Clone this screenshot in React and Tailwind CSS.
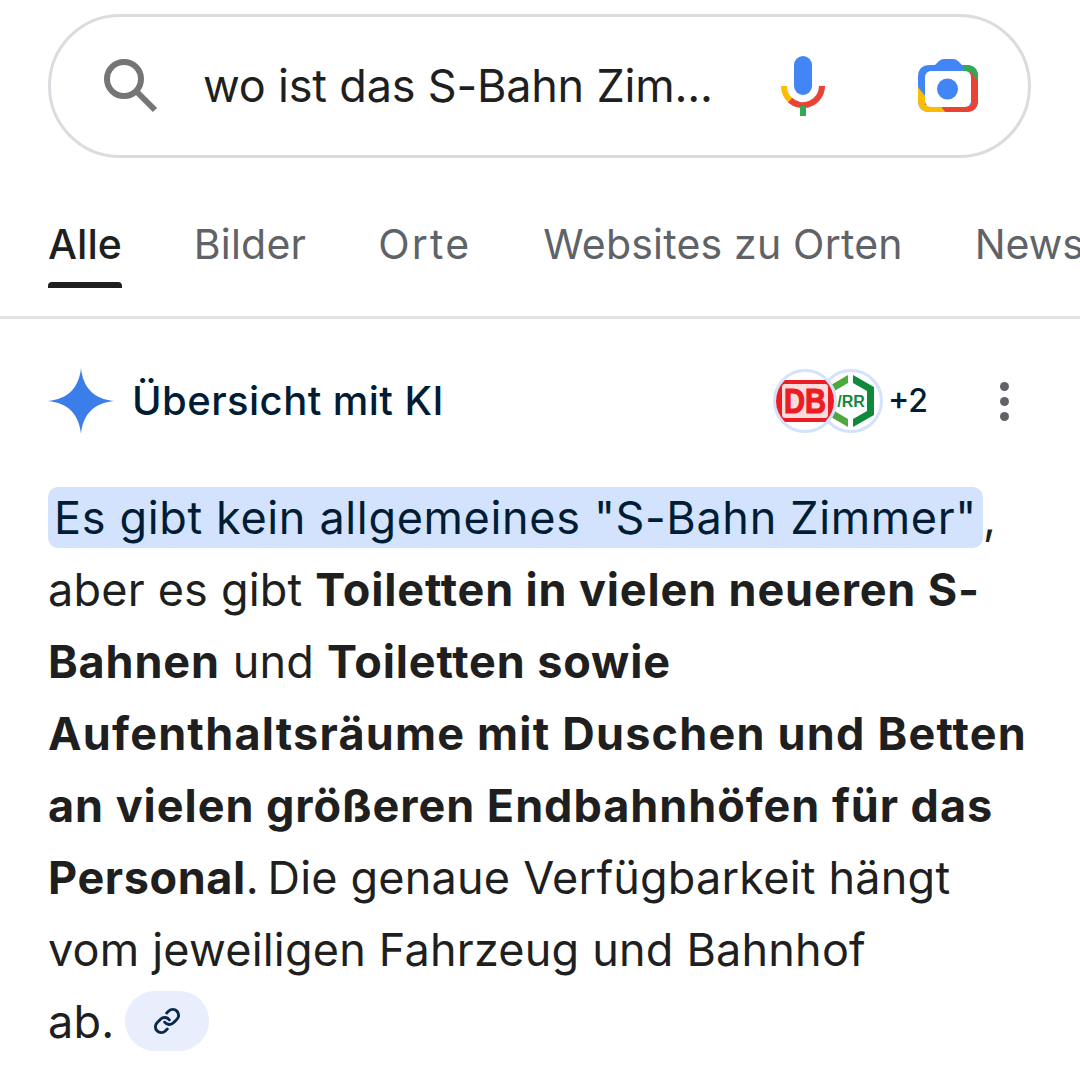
import React from 'react';

const font = { fontFamily: 'Inter, sans-serif' };

const MicIcon = () => (
  <svg width="44" height="62" viewBox="0 0 44 62" fill="none">
    <rect x="13" y="0" width="18" height="39" rx="9" fill="#4285f4" />
    <path d="M3 30 A19 19 0 0 0 9 44" stroke="#fbbc04" strokeWidth="6" />
    <path d="M9 44 A19 19 0 0 0 41 30" stroke="#ea4335" strokeWidth="6" />
    <rect x="19" y="50" width="6" height="10" fill="#34a853" />
  </svg>
);

const CameraIcon = () => (
  <svg width="60" height="54" viewBox="0 0 60 54" fill="none">
    <defs>
      <clipPath id="cam">
        <path d="M12 6 H17 L21 2 Q23 0 26 0 H35 Q38 0 40 2 L44 6 H48 Q60 6 60 18 V41 Q60 53 48 53 H12 Q0 53 0 41 V18 Q0 6 12 6Z" />
      </clipPath>
    </defs>
    <g clipPath="url(#cam)">
      <rect x="0" y="0" width="60" height="54" fill="#4285f4" />
      <path d="M46 0 H60 V22 L52 14 H46 Z" fill="#34a853" />
      <path d="M52 12 L60 22 V54 H28 L22 47 H54 Z" fill="#ea4335" />
      <path d="M0 28 L7 37 V46 H22 L28 54 H0 Z" fill="#fbbc04" />
    </g>
    <rect x="7" y="12" width="46" height="36" rx="6" fill="#fff" />
    <circle cx="29.500" cy="30" r="10.500" fill="#4285f4" />
  </svg>
);

const Sparkle = () => (
  <svg width="66" height="66" viewBox="0 0 66 66">
    <path d="M33 0 C35 20 46 31 66 33 C46 35 35 46 33 66 C31 46 20 35 0 33 C20 31 31 20 33 0Z" fill="#3b7de9" />
  </svg>
);

const Logos = () => (
  <div className="flex items-center">
    <div className="z-10 flex h-[64px] w-[64px] items-center justify-center overflow-hidden rounded-full border-[3px] border-[#d3e3fd] bg-white">
      <svg width="58" height="58" viewBox="0 0 58 58">
        <rect x="-2" y="8" width="62" height="42" rx="6" fill="#ec1c24" />
        <rect x="6" y="12" width="46" height="34" rx="3" fill="#fff" opacity="0.85" />
        <text x="29" y="41" textAnchor="middle" fontSize="35" fontWeight="700" fill="#ec1c24" stroke="#ec1c24" strokeWidth="1.200" fontFamily="Liberation Sans, sans-serif" textLength="42" lengthAdjust="spacingAndGlyphs">DB</text>
      </svg>
    </div>
    <div className="ml-[-18px] flex h-[64px] w-[64px] items-center justify-center rounded-full border-[3px] border-[#d3e3fd] bg-white">
      <svg width="58" height="58" viewBox="0 0 58 58">
        <path d="M26 3 L9 13 V21 L26 11 Z" fill="#4fa83d" />
        <path d="M26 55 L9 45 V37 L26 47 Z" fill="#4fa83d" />
        <path d="M31 3 L52 15 V43 L31 55 V47 L45 39 V19 L31 11 Z" fill="#0f8a3c" />
        <text x="29" y="35" textAnchor="middle" fontSize="16" fontWeight="700" fill="#0f8a3c" fontFamily="Liberation Sans, sans-serif">/RR</text>
      </svg>
    </div>
  </div>
);

const App = () => {
  return (
    <div className="h-[1080px] w-[1080px] overflow-hidden bg-white text-[#1f1f1f]" style={font}>
      <div className="pr-[49px] pl-[48px] pt-[14px]">
        <div className="flex h-[144px] items-center rounded-full border-[3px] border-[#dadce0] pl-[53px]">
          <svg width="54" height="54" viewBox="0 0 54 54" fill="none" stroke="#757575" strokeWidth="6">
            <circle cx="20" cy="20" r="17" />
            <path d="M32 32 L51 51" />
          </svg>
          <span className="ml-[45px] w-[510px] text-[45px] tracking-[-0.2px] whitespace-nowrap">wo ist das S-Bahn Zim...</span>
          <div className="ml-[68px] mt-[2px]"><MicIcon /></div>
          <div className="ml-[93px]"><CameraIcon /></div>
        </div>
      </div>

      <div className="mt-[51px] flex h-[110px] gap-[72px] overflow-hidden border-b-[3px] border-[#e3e3e3] pl-[48px] text-[41px] whitespace-nowrap text-[#5f6368]">
        <div className="flex h-[79px] flex-col justify-between">
          <span className="leading-[70px] font-medium text-[#1f1f1f]">Alle</span>
          <div className="h-[6px] rounded-t-sm bg-[#1f1f1f]" />
        </div>
        <span className="leading-[70px] tracking-[0.2px]">Bilder</span>
        <span className="leading-[70px] tracking-[2.2px]">Orte</span>
        <span className="leading-[70px] tracking-[0.2px]">Websites zu Orten</span>
        <span className="leading-[70px]">News</span>
      </div>

      <div className="mt-[42px] flex h-[80px] items-center pl-[48px]">
        <Sparkle />
        <span className="ml-[18px] text-[40px] font-medium tracking-[0.45px] text-[#001d35]">Übersicht mit KI</span>
        <div className="ml-auto flex items-center">
          <Logos />
          <span className="ml-[5px] text-[32px] font-medium text-[#001d35]">+2</span>
          <div className="mr-[71px] ml-[72px] flex flex-col gap-[6px]">
            <div className="h-[9px] w-[9px] rounded-full bg-[#5f6368]" />
            <div className="h-[9px] w-[9px] rounded-full bg-[#5f6368]" />
            <div className="h-[9px] w-[9px] rounded-full bg-[#5f6368]" />
          </div>
        </div>
      </div>

      <p className="mt-[41px] pl-[48px] text-[45px] leading-[72px] tracking-[0.2px] whitespace-nowrap text-[#1f1f1f]">
        <span className="rounded-[10px] bg-[#d3e3fd] px-[6px] py-[3px] tracking-[0.65px] text-[#001d35]">Es gibt kein allgemeines "S-Bahn Zimmer"</span>,<br />
        aber es gibt <b className="tracking-[0.85px]">Toiletten in vielen neueren S-</b><br />
        <b className="tracking-[0.85px]">Bahnen</b> und <b className="tracking-[0.85px]">Toiletten sowie</b><br />
        <b className="tracking-[1.2px]">Aufenthaltsräume mit Duschen und Betten</b><br />
        <b className="tracking-[0.95px]">an vielen größeren Endbahnhöfen für das</b><br />
        <b className="tracking-[0.6px]">Personal</b><span className="tracking-[-2px]">. </span>Die genaue Verfügbarkeit hängt<br />
        vom jeweiligen Fahrzeug und Bahnhof<br />
        ab.
        <span className="mt-[5px] ml-[11px] inline-flex h-[60px] w-[84px] items-center justify-center rounded-full bg-[#e8eefc] align-top">
          <svg width="28" height="28" viewBox="0 0 24 24" fill="none" stroke="#0b2a4a" strokeWidth="2.500" strokeLinecap="round" strokeLinejoin="round">
            <path d="M10 13a5 5 0 0 0 7.540.540l3-3a5 5 0 0 0-7.070-7.070l-1.720 1.710" />
            <path d="M14 11a5 5 0 0 0-7.540-.540l-3 3a5 5 0 0 0 7.070 7.070l1.710-1.710" />
          </svg>
        </span>
      </p>
    </div>
  );
};

export default App;
